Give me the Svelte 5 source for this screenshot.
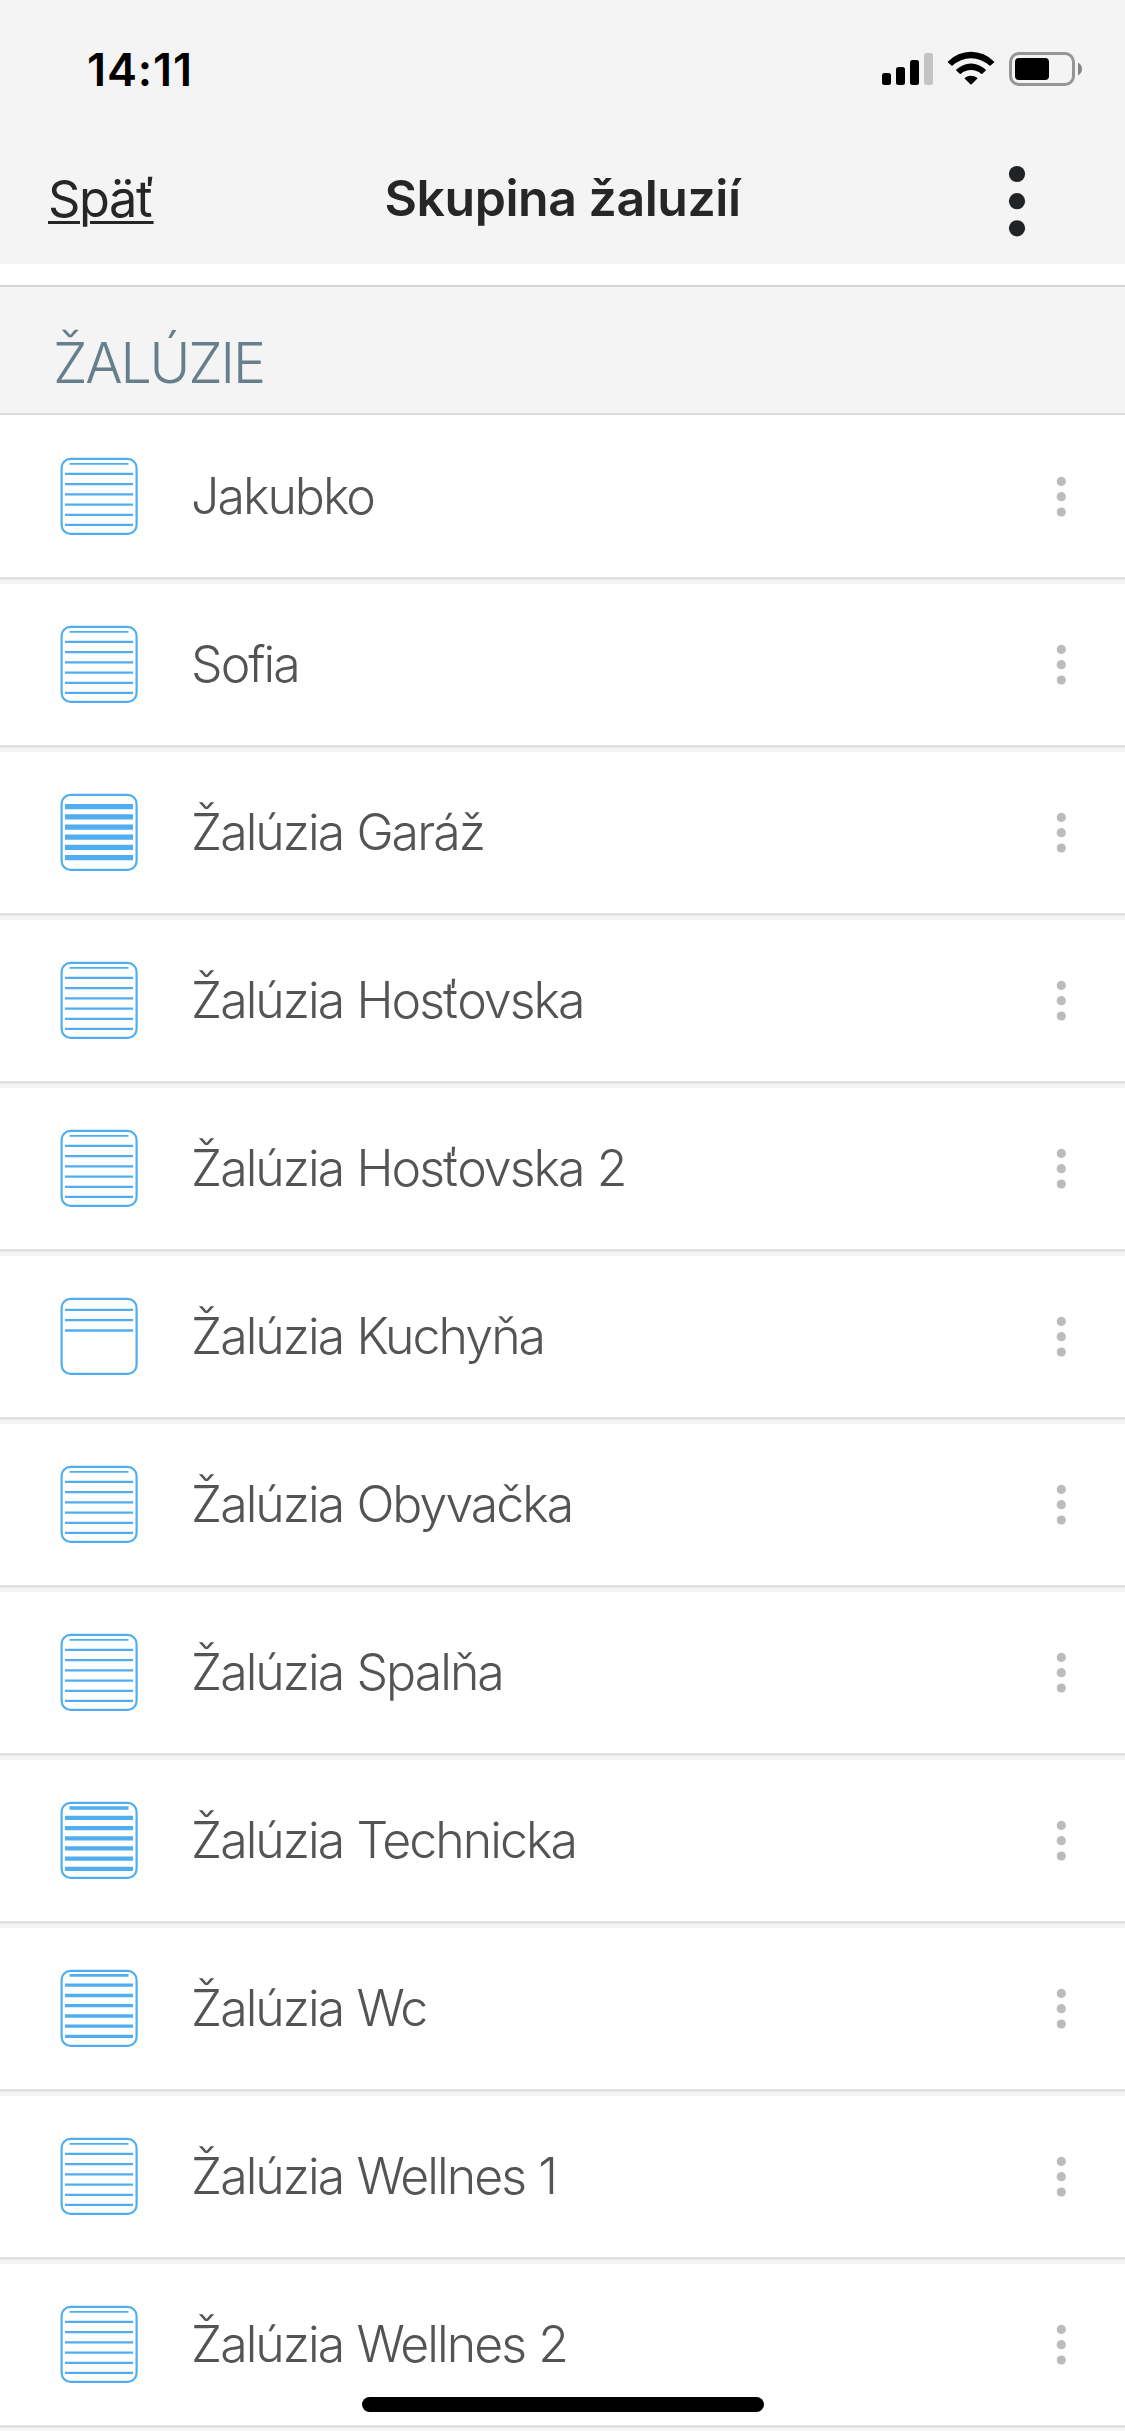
<script>
  const shutters = [
    { name: 'Jakubko', state: 'open' },
    { name: 'Sofia', state: 'open' },
    { name: 'Žalúzia Garáž', state: 'closed' },
    { name: 'Žalúzia Hosťovska', state: 'open' },
    { name: 'Žalúzia Hosťovska 2', state: 'open' },
    { name: 'Žalúzia Kuchyňa', state: 'raised' },
    { name: 'Žalúzia Obyvačka', state: 'open' },
    { name: 'Žalúzia Spalňa', state: 'open' },
    { name: 'Žalúzia Technicka', state: 'tilted' },
    { name: 'Žalúzia Wc', state: 'half' },
    { name: 'Žalúzia Wellnes 1', state: 'open' },
    { name: 'Žalúzia Wellnes 2', state: 'open' }
  ];

  // slat centres and thickness inside the 78x78 icon; top = y of the short slat
  const blinds = {
    open: { top: 6.8, width: 2.3, slats: [16.9, 27.2, 37.4, 47.6, 57.8, 67.9] },
    closed: { width: 5.2, slats: [13.6, 23.8, 34.1, 44.2, 54.4, 64.6] },
    raised: { width: 2.3, slats: [12.9, 23.2, 33.5] },
    tilted: { top: 7, width: 4.2, slats: [16.9, 27.2, 37.3, 47.4, 57.6, 67.9] },
    half: { top: 6.4, width: 3.3, slats: [16.2, 26.5, 36.7, 47, 57.2, 67.3] }
  };
</script>

<div class="screen">
  <header>
    <div class="status">
      <span class="time">14:11</span>
      <svg class="indicators" width="202" height="36" viewBox="0 0 202 36">
        <rect x="1" y="22" width="9" height="12" rx="2.5" />
        <rect x="15" y="16" width="9" height="18" rx="2.5" />
        <rect x="29" y="9" width="9" height="25" rx="2.5" />
        <rect x="43" y="2" width="9" height="32" rx="2.5" fill="#c4c4c4" />
        <path d="M67 10.4A32 32 0 0 1 113 10.4Q113.4 10.9 113 11.4L109.6 14.6Q109 15 108.4 14.6A26.6 26.6 0 0 0 71.6 14.6Q71 15 70.4 14.6L67 11.4Q66.6 10.9 67 10.4Z" />
        <path d="M75.3 18.6A21 21 0 0 1 104.7 18.6Q105.1 19.1 104.7 19.6L101.3 22.8Q100.7 23.2 100.1 22.8A15.5 15.5 0 0 0 79.9 22.8Q79.3 23.2 78.7 22.8L75.3 19.6Q74.9 19.1 75.3 18.6Z" />
        <path d="M83.8 26.8A10 10 0 0 1 96.2 26.8Q96.7 27.3 96.2 27.8L90.6 33.3Q90 33.9 89.4 33.3L83.8 27.8Q83.3 27.3 83.8 26.8Z" />
        <rect x="129.5" y="2.5" width="63" height="31" rx="8.5" fill="none" stroke="#959595" stroke-width="3" />
        <rect x="134" y="7" width="34" height="22" rx="4" />
        <path d="M197 11.5C202.3 14 202.3 22 197 24.5Z" fill="#858585" />
      </svg>
    </div>
    <nav>
      <a class="back" href="#back">Späť</a>
      <h1>Skupina žaluzií</h1>
      <svg class="menu" width="18" height="72" viewBox="0 0 18 72">
        {#each [9, 36.2, 63.3] as cy}
          <circle cx="9" {cy} r="8.1" />
        {/each}
      </svg>
    </nav>
  </header>

  <h2>ŽALÚZIE</h2>

  <ul>
    {#each shutters as shutter}
      {@const blind = blinds[shutter.state]}
      <li>
        <svg class="blind" width="78" height="78" viewBox="0 0 78 78">
          <rect x="1.6" y="1.9" width="75" height="75" rx="9" stroke-width="2.2" />
          {#if blind.top}
            <path d="M9.5 {blind.top}H68.5" stroke-width={blind.width * 0.8} />
          {/if}
          {#each blind.slats as y}
            <path d="M5 {y}H73" stroke-width={blind.width} />
          {/each}
        </svg>
        <span class="name">{shutter.name}</span>
        <svg class="more" width="10" height="42" viewBox="0 0 10 42">
          {#each [6.4, 21.7, 37] as cy}
            <circle cx="5.3" {cy} r="4.6" />
          {/each}
        </svg>
      </li>
    {/each}
  </ul>

  <div class="home-bar"></div>
</div>

<style>
  :global(body) { margin: 0; background: #fff; }

  .screen { position: relative; width: 1125px; height: 2436px; overflow: hidden; background: #fff; font-family: Inter, "Liberation Sans", sans-serif; }

  header { height: 264px; background: #f4f4f4; }
  .status { display: flex; justify-content: space-between; align-items: center; height: 138px; padding: 0 42px 0 87px; box-sizing: border-box; }
  .time { font-size: 45px; font-weight: 600; color: #000; letter-spacing: 0.9px; }
  .indicators { fill: #000; }

  nav { display: grid; grid-template-columns: 1fr auto 1fr; align-items: center; height: 126px; padding: 0 48px; box-sizing: border-box; color: #262626; }
  .back { padding-bottom: 6px; color: #262626; font-size: 50.5px; letter-spacing: -1.4px; text-decoration: underline; text-decoration-thickness: 3px; text-underline-offset: 4px; }
  h1 { margin: 0; padding-bottom: 6px; font-size: 50px; font-weight: 600; letter-spacing: -0.45px; }
  .menu { justify-self: end; margin-right: 51px; fill: #212224; }

  h2 { display: flex; align-items: center; height: 130px; margin: 21px 0 0; padding: 25px 0 0 53px; box-sizing: border-box; border-top: 2px solid #d4d4d4; border-bottom: 2px solid #dcdcdc; background: #f4f4f4; color: #667f8b; font-size: 55.5px; font-weight: 300; letter-spacing: -2.2px; }

  ul { margin: 0; padding: 0; list-style: none; }
  li { display: flex; align-items: center; height: 168px; padding: 0 59px 6px 60px; box-sizing: border-box; background: linear-gradient(#fff 162px, #e6e6e6 162px, #e6e6e6 163px, #d8d8d8 163px, #d8d8d8 164px, #ececec 164px, #ececec 165px, #f4f4f4 165px); }
  li + li { background: linear-gradient(#f4f4f4 1px, #fff 1px, #fff 162px, #e6e6e6 162px, #e6e6e6 163px, #d8d8d8 163px, #d8d8d8 164px, #ececec 164px, #ececec 165px, #f4f4f4 165px); }
  .blind { fill: none; stroke: #4fadf0; }
  .name { flex: 1; margin-left: 53px; color: #545454; font-size: 50px; font-weight: 300; letter-spacing: -1.95px; word-spacing: 1px; white-space: nowrap; }
  .more { fill: #bcbcbc; }

  .home-bar { position: absolute; left: 362px; bottom: 24px; width: 402px; height: 15px; border-radius: 8px; background: #000; }
</style>
